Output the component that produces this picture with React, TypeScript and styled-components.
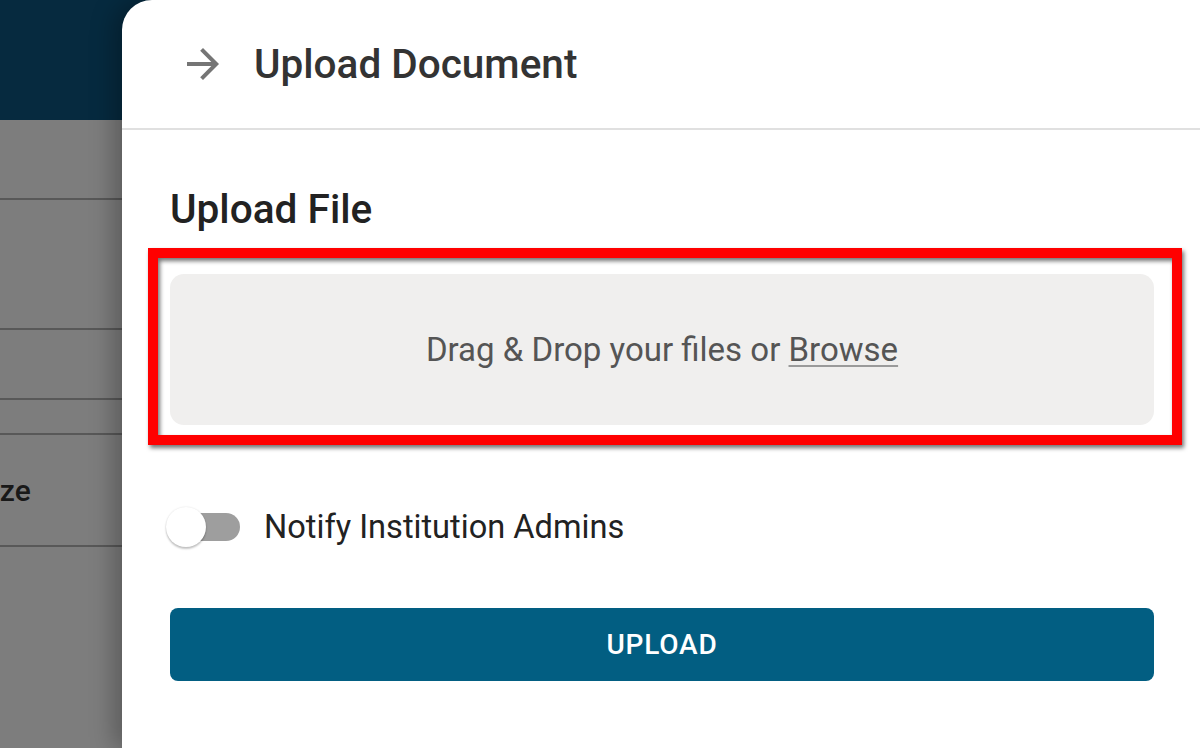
import React from "react";
import styled, { createGlobalStyle } from "styled-components";

const Global = createGlobalStyle`
  html, body { margin: 0; padding: 0; }
  body { font-family: Roboto, "Liberation Sans", Arial, sans-serif; background: #fff; }
  * { box-sizing: border-box; }
`;

const Screen = styled.div`
  position: relative;
  width: 1200px;
  height: 748px;
  overflow: hidden;
  background: #fff;
`;

const Page = styled.div`
  display: flex;
  flex-direction: column;
  width: 100%;
  height: 100%;
`;

const TopBar = styled.div`
  height: 120px;
  background: #0e5681;
  flex-shrink: 0;
`;

const TableRow = styled.div<{ $h: number }>`
  height: ${(p) => p.$h}px;
  border-bottom: 2px solid #b4b4b4;
  display: flex;
  align-items: center;
  overflow: hidden;
  flex-shrink: 0;
`;

const HeaderCell = styled.span`
  font-size: 30px;
  font-weight: 500;
  color: #333;
  white-space: nowrap;
  text-indent: -26px;
  display: block;
`;

const Backdrop = styled.div`
  position: absolute;
  inset: 0;
  background: rgba(0, 0, 0, 0.51);
`;

const Drawer = styled.aside`
  position: absolute;
  top: 0;
  right: 0;
  bottom: 0;
  width: 1078px;
  background: #fff;
  border-top-left-radius: 30px;
  box-shadow: -8px 0 24px rgba(0, 0, 0, 0.28);
  display: flex;
  flex-direction: column;
`;

const DrawerHeader = styled.header`
  height: 130px;
  border-bottom: 2px solid #e0e0e0;
  display: flex;
  align-items: center;
  padding-left: 57px;
  gap: 27px;
  flex-shrink: 0;
`;

const IconButton = styled.button`
  width: 48px;
  height: 48px;
  padding: 0;
  border: none;
  background: transparent;
  display: flex;
  align-items: center;
  justify-content: center;
  color: #757575;
  cursor: pointer;
`;

const DrawerTitle = styled.h1`
  margin: 0;
  font-size: 40.5px;
  line-height: 48px;
  font-weight: 500;
  color: #333;
`;

const Body = styled.div`
  display: flex;
  flex-direction: column;
  padding: 0 46px 0 48px;
`;

const SectionTitle = styled.h2`
  margin: 55px 0 0;
  font-size: 40.6px;
  line-height: 48px;
  font-weight: 500;
  color: #222;
`;

const DropWrap = styled.div`
  position: relative;
  margin-top: 41px;
`;

const Highlight = styled.div`
  position: absolute;
  top: -26px;
  left: -22px;
  right: -28px;
  bottom: -20px;
  border: 10px solid #ff0000;
  pointer-events: none;
  filter: drop-shadow(2px 3px 2px rgba(0, 0, 0, 0.55));
`;

const DropZone = styled.div`
  height: 151px;
  border-radius: 14px;
  background: #f0efee;
  display: flex;
  align-items: center;
  justify-content: center;
  font-size: 33px;
  color: #555;
`;

const BrowseLink = styled.span`
  text-decoration: underline;
  text-decoration-color: #9a9a9a;
  text-decoration-thickness: 2px;
  text-underline-offset: 4px;
  cursor: pointer;
`;

const ToggleRow = styled.label`
  margin-top: 82px;
  display: flex;
  align-items: center;
  gap: 24px;
  height: 40px;
  margin-left: -4px;
`;

const Switch = styled.span`
  position: relative;
  width: 74px;
  height: 40px;
  flex-shrink: 0;
`;

const Track = styled.span`
  position: absolute;
  left: 4px;
  top: 6px;
  width: 70px;
  height: 28px;
  border-radius: 14px;
  background: #9e9e9e;
`;

const Thumb = styled.span`
  position: absolute;
  left: 0;
  top: 0;
  width: 40px;
  height: 40px;
  border-radius: 50%;
  background: #fff;
  box-shadow: 0 2px 2px rgba(0, 0, 0, 0.22), 0 0 2px rgba(0, 0, 0, 0.12);
`;

const ToggleLabel = styled.span`
  font-size: 32.6px;
  color: #222;
`;

const UploadButton = styled.button`
  margin-top: 61px;
  height: 73px;
  border: none;
  border-radius: 8px;
  background: #025e82;
  color: #fff;
  font-family: Roboto, "Liberation Sans", Arial, sans-serif;
  font-size: 28px;
  font-weight: 500;
  letter-spacing: 0.8px;
  text-transform: uppercase;
  cursor: pointer;
`;

const rows = [80, 130, 70, 35, 112];

export default function App() {
  return (
    <Screen>
      <Global />
      <Page>
        <TopBar />
        {rows.map((h, i) => (
          <TableRow key={i} $h={h}>
            {i === 4 ? <HeaderCell>Size</HeaderCell> : null}
          </TableRow>
        ))}
      </Page>
      <Backdrop />
      <Drawer>
        <DrawerHeader>
          <IconButton aria-label="Close">
            <svg width="48" height="48" viewBox="0 0 24 24" fill="currentColor">
              <path d="M12 4l-1.41 1.41L16.17 11H4v2h12.17l-5.58 5.59L12 20l8-8z" />
            </svg>
          </IconButton>
          <DrawerTitle>Upload Document</DrawerTitle>
        </DrawerHeader>
        <Body>
          <SectionTitle>Upload File</SectionTitle>
          <DropWrap>
            <DropZone>
              <span>
                Drag &amp; Drop your files or <BrowseLink>Browse</BrowseLink>
              </span>
            </DropZone>
            <Highlight />
          </DropWrap>
          <ToggleRow>
            <Switch>
              <Track />
              <Thumb />
            </Switch>
            <ToggleLabel>Notify Institution Admins</ToggleLabel>
          </ToggleRow>
          <UploadButton>Upload</UploadButton>
        </Body>
      </Drawer>
    </Screen>
  );
}
